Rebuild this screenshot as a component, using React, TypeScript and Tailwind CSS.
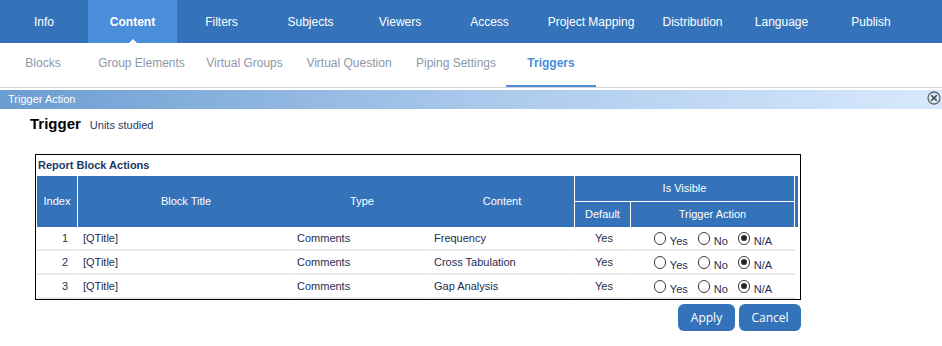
import React from "react";

const navItems: { label: string; w: string; active?: boolean }[] = [
  { label: "Info", w: "w-[88px]" },
  { label: "Content", w: "w-[89px]", active: true },
  { label: "Filters", w: "w-[89px]" },
  { label: "Subjects", w: "w-[89px]" },
  { label: "Viewers", w: "w-[90px]" },
  { label: "Access", w: "w-[89px]" },
  { label: "Project Mapping", w: "w-[114px]" },
  { label: "Distribution", w: "w-[89px]" },
  { label: "Language", w: "w-[89px]" },
  { label: "Publish", w: "w-[90px]" },
];

const subItems: { label: string; w: string; active?: boolean }[] = [
  { label: "Blocks", w: "w-[86px]" },
  { label: "Group Elements", w: "w-[111px]" },
  { label: "Virtual Groups", w: "w-[95px]" },
  { label: "Virtual Question", w: "w-[114px]" },
  { label: "Piping Settings", w: "w-[100px]" },
  { label: "Triggers", w: "w-[90px]", active: true },
];

const rows = [
  { idx: 1, title: "[QTitle]", type: "Comments", content: "Frequency" },
  { idx: 2, title: "[QTitle]", type: "Comments", content: "Cross Tabulation" },
  { idx: 3, title: "[QTitle]", type: "Comments", content: "Gap Analysis" },
];

function Radio({ label, checked }: { label: string; checked?: boolean }) {
  return (
    <span className="flex items-center">
      <span className="w-[12px] h-[13px] rounded-full border border-[#3a3a3a] bg-white flex items-center justify-center">
        {checked && <span className="w-[6px] h-[6px] rounded-full bg-[#2a2a2a]" />}
      </span>
      <span className="ml-[4px] pt-[6px] leading-[13px] text-[#1f2d50]">{label}</span>
    </span>
  );
}

function CloseIcon() {
  return (
    <svg width="14" height="14" viewBox="0 0 14 14">
      <circle cx="7" cy="7" r="6" fill="none" stroke="#666" strokeWidth="1.3" />
      <path d="M4.7 4.7 L9.3 9.3 M9.3 4.7 L4.7 9.3" stroke="#444" strokeWidth="1.6" strokeLinecap="round" />
    </svg>
  );
}

export default function App() {
  return (
    <div className="w-[942px] h-[346px] overflow-hidden bg-white font-['Liberation_Sans',Arial,sans-serif]">
      {/* Top nav */}
      <div className="flex h-[43px] bg-[#3473b9]">
        {navItems.map((n) => (
          <div
            key={n.label}
            className={
              n.active
                ? `relative ${n.w} flex items-center justify-center bg-[#4a8ddb] text-white text-[12px] font-bold`
                : `${n.w} flex items-center justify-center text-white text-[12px]`
            }
          >
            {n.label}
            {n.active && (
              <span className="absolute bottom-0 left-1/2 -translate-x-1/2 w-0 h-0 border-l-[4px] border-r-[4px] border-b-[4px] border-l-transparent border-r-transparent border-b-white" />
            )}
          </div>
        ))}
      </div>

      {/* Sub nav */}
      <div className="flex h-[45px] border-b border-[#d3d3d3]">
        {subItems.map((s) => (
          <div
            key={s.label}
            className={
              s.active
                ? `${s.w} h-[44px] flex items-center justify-center pb-[2px] border-b-2 border-[#4a8ddb] text-[#4a8ddb] text-[12px] font-bold`
                : `${s.w} h-[44px] flex items-center justify-center pb-[4px] text-[#8c97a8] text-[12px]`
            }
          >
            {s.label}
          </div>
        ))}
      </div>

      {/* Trigger Action bar */}
      <div className="mt-[2px] h-[19px] flex justify-between bg-gradient-to-r from-[#6b9dd1] via-[#a9c8eb] to-[#d8e9fd]">
        <span className="pl-[8px] text-[11px] text-white leading-[19px]">Trigger Action</span>
        <span className="mt-[1px] mr-[1px]">
          <CloseIcon />
        </span>
      </div>

      {/* Heading */}
      <div className="pl-[30px] pt-[6px] flex items-baseline h-[23px]">
        <span className="text-[15px] font-bold text-black leading-[17px]">Trigger</span>
        <span className="ml-[9px] text-[11px] text-[#2b3a5c] leading-[17px]">Units studied</span>
      </div>

      {/* Box */}
      <div className="ml-[35px] w-[766px] mt-[22px]">
        <div className="border border-black px-[1px]">
          <div className="h-[21px] flex items-center pl-[1px] text-[11px] font-bold text-[#203864]">
            Report Block Actions
          </div>
          <table className="w-[761px] table-fixed border-separate border-spacing-0 text-[11px]">
            <colgroup>
              <col className="w-[41px]" />
              <col className="w-[216px]" />
              <col className="w-[136px]" />
              <col className="w-[145px]" />
              <col className="w-[56px]" />
              <col className="w-[164px]" />
              <col className="w-[3px]" />
            </colgroup>
            <thead>
              <tr className="h-[26px]">
                <th rowSpan={2} className="bg-[#3473b9] text-white font-normal border-r border-white">
                  Index
                </th>
                <th rowSpan={2} className="bg-[#3473b9] text-white font-normal">
                  Block Title
                </th>
                <th rowSpan={2} className="bg-[#3473b9] text-white font-normal">
                  Type
                </th>
                <th rowSpan={2} className="bg-[#3473b9] text-white font-normal border-r border-white">
                  Content
                </th>
                <th colSpan={2} className="bg-[#3473b9] text-white font-normal border-b border-r border-white">
                  Is Visible
                </th>
                <th rowSpan={2} className="bg-[#3473b9]"></th>
              </tr>
              <tr className="h-[25px]">
                <th className="bg-[#3473b9] text-white font-normal border-r border-white">Default</th>
                <th className="bg-[#3473b9] text-white font-normal border-r border-white">Trigger Action</th>
              </tr>
            </thead>
            <tbody className="text-[#1f2d50]">
              {rows.map((r) => (
                <tr key={r.idx} className="h-[24px]">
                  <td className="text-right pr-[10px] pt-[1px] border-b-2 border-[#ebebeb]">{r.idx}</td>
                  <td className="pl-[3px] pt-[1px] border-b-2 border-l-2 border-b-[#ebebeb] border-l-white">{r.title}</td>
                  <td className="pl-[1px] pt-[1px] border-b-2 border-l-2 border-b-[#ebebeb] border-l-white">{r.type}</td>
                  <td className="pl-[2px] pt-[1px] border-b-2 border-l-2 border-b-[#ebebeb] border-l-white">{r.content}</td>
                  <td className="text-center pt-[1px] border-b-2 border-l-2 border-b-[#ebebeb] border-l-white">Yes</td>
                  <td className="border-b-2 border-l-2 border-b-[#ebebeb] border-l-white">
                    <div className="flex items-center justify-center gap-[10px] pr-[2px]">
                      <Radio label="Yes" />
                      <Radio label="No" />
                      <Radio label="N/A" checked />
                    </div>
                  </td>
                  <td></td>
                </tr>
              ))}
            </tbody>
          </table>
        </div>
        <div className="flex justify-end gap-[4px] mt-[4px] font-['Open_Sans',sans-serif]">
          <button className="w-[57px] h-[27px] rounded-[6px] bg-[#3473b9] text-white text-[12px]">Apply</button>
          <button className="w-[62px] h-[27px] rounded-[6px] bg-[#3473b9] text-white text-[12px]">Cancel</button>
        </div>
      </div>
    </div>
  );
}
